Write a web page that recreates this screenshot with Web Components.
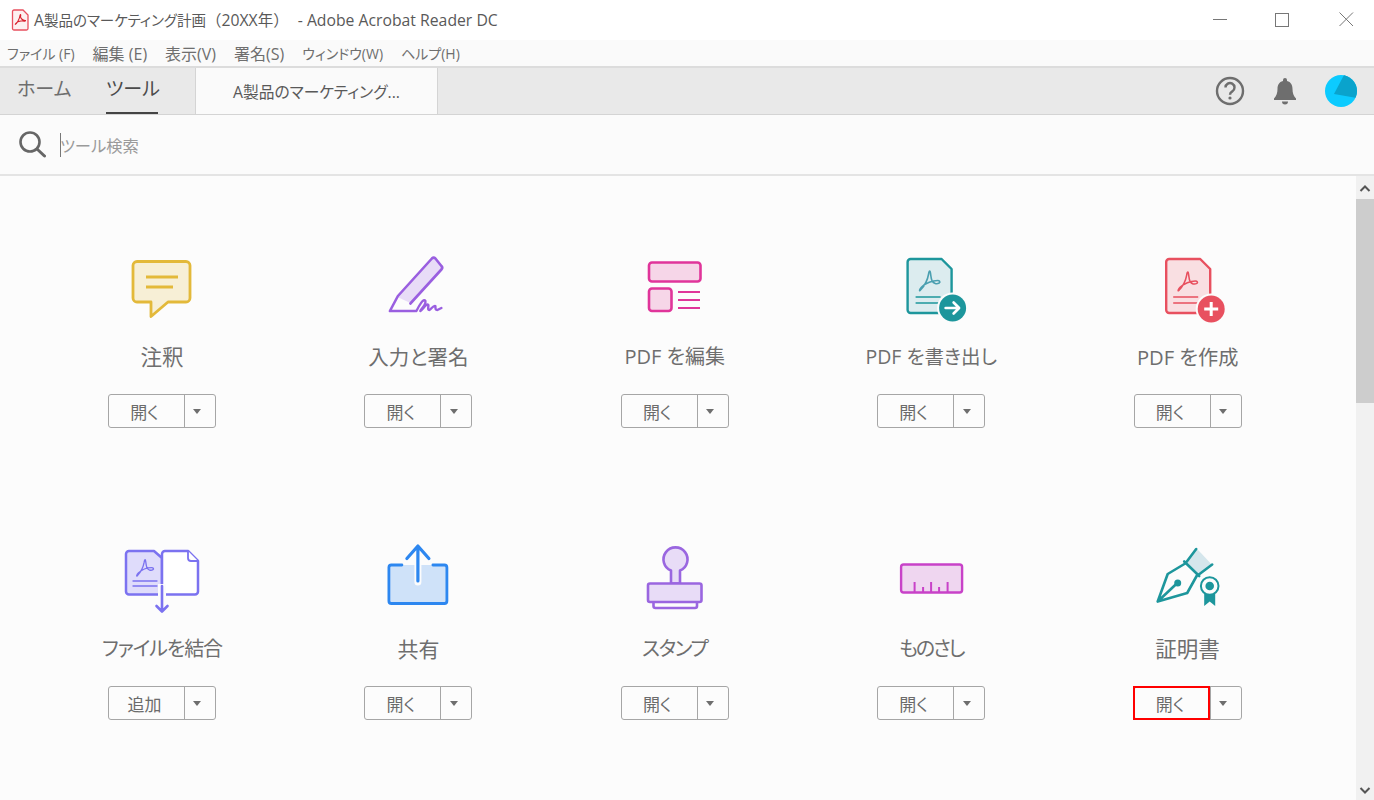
<!DOCTYPE html>
<html lang="ja">
<head>
<meta charset="utf-8">
<title>Adobe Acrobat Reader DC</title>
<style>
    html, body { margin: 0; height: 100%; overflow: hidden; }
    body {
        display: flex;
        flex-direction: column;
        background: #fcfcfc;
        font-family: "Open Sans", "Noto Sans CJK JP", sans-serif;
        font-feature-settings: "palt";
        color: #6b6b6b;
    }
    .content { flex: 1; display: flex; min-height: 0; }
</style>
</head>
<body>
<svg width="0" height="0" style="position:absolute">
    <symbol id="pdf-mark" viewBox="0 0 24 24">
        <path fill="none" stroke="currentColor" stroke-width="1.600" stroke-linejoin="round" d="M2.500 21.500C6 18 10 11 11 5 11.300 2.500 12 1.500 12.500 2.500 13.500 6 13 9 14.500 12 16 14.500 19 15.500 21.500 14 23 13 22 11.500 20 11.500 15 11.500 8 14 4 18 2 20 1.500 22.500 2.500 21.500Z"/>
    </symbol>
</svg>

<app-titlebar>A<span class="jp">製品のマーケティング計画</span><span class="fw">（</span>20XX<span class="fw">年）</span><span class="tail">- Adobe Acrobat Reader DC</span></app-titlebar>
<app-menubar>
    <span>ファイル (F)</span>
    <span class="k">編集 (E)</span>
    <span class="k">表示(V)</span>
    <span class="k">署名(S)</span>
    <span>ウィンドウ(W)</span>
    <span>ヘルプ(H)</span>
</app-menubar>
<app-tabbar doc="A製品のマーケティング..."></app-tabbar>
<tool-search placeholder="ツール検索"></tool-search>

<div class="content">
    <tool-grid>
        <tool-card label="注釈" action="開く" style="--label-size:21.500px">
            <svg slot="icon" viewBox="126 250 72 72" fill="none" stroke="#e3b93a" stroke-width="2.800" stroke-linejoin="round" stroke-linecap="round">
                <path fill="#f7efd6" d="M137 261.500H186a4 4 0 0 1 4 4V298a4 4 0 0 1-4 4H168L151 316.500V302H137a4 4 0 0 1-4-4V265.500a4 4 0 0 1 4-4Z"/>
                <path stroke-width="3" stroke-linecap="butt" d="M146 277H178M146 287H173"/>
            </svg>
        </tool-card>
        <tool-card label="入力と署名" action="開く" style="--label-size:20.500px">
            <svg slot="icon" viewBox="382.600 250 72 72" fill="none" stroke="#9a5fe0" stroke-width="2.600" stroke-linejoin="round" stroke-linecap="round">
                <path fill="#e8dcf7" stroke="none" d="M433 257L443 268 411 303 398 297 402 291Z"/>
                <path d="M411 303.500L442 269.500a2.500 2.500 0 0 0 0-3.500L436 258.500a2.500 2.500 0 0 0-3.500 0L398.500 296 390.500 311H416"/>
                <path stroke-width="2.400" d="M417 311C420 305 424 298 426 301 427 305 420 311 421 311 424 309 427 303 429 305 429 308 428 310 430 310 432 309 434 305 436 306 436 309 436 310 438 310L442 308"/>
            </svg>
        </tool-card>
        <tool-card label="PDF を編集" action="開く" style="--label-size:20px">
            <svg slot="icon" viewBox="639 250 72 72" fill="#f6d6e8" stroke="#e0359a" stroke-width="2.600">
                <rect x="649" y="262.500" width="51.500" height="19" rx="3"/>
                <rect x="649" y="288.500" width="22.500" height="22.500" rx="3"/>
                <path fill="none" stroke-width="2" d="M678 292H700M678 300H700M678 308H700"/>
            </svg>
        </tool-card>
        <tool-card label="PDF を書き出し" action="開く" style="--label-size:19.500px">
            <svg slot="icon" viewBox="895.400 250 72 72" fill="none" stroke="#1d969c" stroke-width="2.400" stroke-linejoin="round">
                <path fill="#dcecef" d="M911 259H942L952 269V310a3 3 0 0 1-3 3H911a3 3 0 0 1-3-3V262a3 3 0 0 1 3-3Z"/>
                <use href="#pdf-mark" x="918" y="269" width="24" height="24" stroke="none" style="color:#4a9fb0"/>
                <path stroke-width="1.400" d="M916 297H941M916 303H941"/>
                <circle cx="953" cy="308" r="15.500" fill="#fcfcfc" stroke="none"/>
                <circle cx="953" cy="308" r="13.500" fill="#1d969c" stroke="none"/>
                <path stroke="#fff" stroke-width="2.600" stroke-linecap="round" d="M946 308H959M954 302.500L959.500 308 954 313.500"/>
            </svg>
        </tool-card>
        <tool-card label="PDF を作成" action="開く" style="--label-size:20.200px">
            <svg slot="icon" viewBox="1151.800 250 72 72" fill="none" stroke="#e8505f" stroke-width="2.400" stroke-linejoin="round">
                <path fill="#f9dfe2" d="M1169 259H1200L1210 269V310a3 3 0 0 1-3 3H1169a3 3 0 0 1-3-3V262a3 3 0 0 1 3-3Z"/>
                <use href="#pdf-mark" x="1176" y="270" width="23" height="23" stroke="none" style="color:#e8505f"/>
                <path stroke-width="1.400" d="M1173 297H1198M1173 303H1198"/>
                <circle cx="1211" cy="309" r="15.500" fill="#fcfcfc" stroke="none"/>
                <circle cx="1211" cy="309" r="13.500" fill="#e8505f" stroke="none"/>
                <path stroke="#fff" stroke-width="3" d="M1204 309H1218M1211 302V316"/>
            </svg>
        </tool-card>

        <tool-card label="ファイルを結合" action="追加" style="--label-size:20px;--label-track:-1.100px">
            <svg slot="icon" viewBox="126 542 72 72" fill="none" stroke="#7b72f0" stroke-width="2.500" stroke-linejoin="round" stroke-linecap="round">
                <path fill="#dfdcfb" d="M129 551H154L162 558V594.500H129a3 3 0 0 1-3-3V554a3 3 0 0 1 3-3Z"/>
                <path fill="#fff" d="M165 551H188L198 561V591.500a3 3 0 0 1-3 3H162V554a3 3 0 0 1 3-3Z"/>
                <path fill="#fff" stroke-width="1.800" d="M188 551V558a3 3 0 0 0 3 3H198"/>
                <use href="#pdf-mark" x="135" y="558" width="20" height="20" stroke="none" style="color:#7b72f0"/>
                <path stroke-width="1.300" d="M133 581H157M133 586H157"/>
                <rect x="158" y="584" width="8" height="14" fill="#fcfcfc" stroke="none"/>
                <path stroke-width="2.600" d="M162 586V611M156.500 606L162 611.500 167.500 606"/>
            </svg>
        </tool-card>
        <tool-card label="共有" action="開く">
            <svg slot="icon" viewBox="382.600 542 72 72" fill="none" stroke="#2d87f0" stroke-width="2.800" stroke-linejoin="round" stroke-linecap="round">
                <path fill="#cfe2f9" stroke="none" d="M390 565H447V603H390Z"/>
                <path d="M402.500 565H392a2.500 2.500 0 0 0-2.500 2.500V601a2.500 2.500 0 0 0 2.500 2.500H445a2.500 2.500 0 0 0 2.500-2.500V567.500A2.500 2.500 0 0 0 445 565H433.500"/>
                <path stroke="#fcfcfc" stroke-width="7" d="M418.500 560V582"/>
                <path stroke-width="3.200" d="M418.500 547V581M407.500 558.500L418.500 546 429.500 558.500"/>
            </svg>
        </tool-card>
        <tool-card label="スタンプ" action="開く" style="--label-size:20px;--label-track:-1.400px">
            <svg slot="icon" viewBox="639 542 72 72" fill="#e8dcf7" stroke="#9a66e0" stroke-width="2.600" stroke-linejoin="round">
                <path d="M671 570.500a12 12 0 1 1 9 0V583.500H671Z"/>
                <rect x="648" y="583.500" width="53.500" height="18.500" rx="2"/>
                <path fill="none" d="M653.500 602V606a2 2 0 0 0 2 2H695a2 2 0 0 0 2-2V602"/>
            </svg>
        </tool-card>
        <tool-card label="ものさし" action="開く" style="--label-size:20px;--label-track:-2.200px">
            <svg slot="icon" viewBox="895.400 542 72 72" fill="#efd6f0" stroke="#c842c8" stroke-width="2.400">
                <rect x="901.500" y="564.500" width="61" height="28" rx="2.500"/>
                <path fill="none" stroke-width="2" d="M915 582V592M923.500 587V592M931.500 582V592M939.500 587V592M948 582V592"/>
            </svg>
        </tool-card>
        <tool-card label="証明書" action="開く" focused style="--label-size:21.500px">
            <svg slot="icon" viewBox="1151.800 542 72 72" fill="none" stroke="#1d969c" stroke-width="2.600" stroke-linejoin="round" stroke-linecap="round">
                <path fill="#d5e6ec" stroke="none" d="M1196 548L1212 565 1198 574 1186 562Z"/>
                <path d="M1196 549L1185.500 563M1212 564.500L1198 575M1184 561.500L1199 576"/>
                <path d="M1185 563.500L1167.500 574 1157.500 601.500 1187 593 1197 575M1157.500 601.500L1175 585"/>
                <circle cx="1177.500" cy="583" r="3.500" fill="#1d969c" stroke="none"/>
                <path fill="#1d969c" stroke="none" d="M1204 594H1215V606L1209.500 601.500 1204 606Z"/>
                <circle cx="1209.500" cy="586" r="8.800" fill="#fcfcfc" stroke-width="2"/>
                <circle cx="1209.500" cy="586" r="4.300" fill="#1d969c" stroke="none"/>
            </svg>
        </tool-card>
    </tool-grid>
    <app-scrollbar></app-scrollbar>
</div>

<script>
class AppTitlebar extends HTMLElement {
    constructor() {
        super();
        this.attachShadow({ mode: "open" });
        this.shadowRoot.innerHTML = `
            <style>
                :host {
                    display: flex;
                    align-items: center;
                    height: 40px;
                    background: #fff;
                    padding-left: 11px;
                    font-size: 15.750px;
                    color: #595959;
                    flex: none;
                }
                .app-icon { width: 18px; height: 22px; margin-right: 5px; flex: none; }
                .title { flex: 1; white-space: nowrap; position: relative; top: -1px; }
                ::slotted(.jp) { font-size: 14.500px; }
                ::slotted(.fw) { font-size: 15.500px; font-feature-settings: normal; }
                ::slotted(.tail) { margin-left: 9px; }
                .controls { display: flex; margin-right: -4px; }
                .controls svg { width: 64px; height: 40px; display: block; }
            </style>
            <svg class="app-icon" viewBox="0 0 18 22" fill="none">
                <path fill="#fdf0f0" stroke="#e8505f" stroke-width="1.300" d="M3 1H12L17 6V19.500a1.500 1.500 0 0 1-1.500 1.500H3a1.500 1.500 0 0 1-1.500-1.500V2.500A1.500 1.500 0 0 1 3 1Z"/>
                <path stroke="#d8202c" stroke-width="1.100" d="M4 15.500C6 14.500 8.500 10 9 6.500 9.500 4.500 10 6 9.500 8 10.500 10.500 12 11.500 14.500 11.500 15 12.500 12 12 10 12 8 12 5.500 13.500 4 15.500Z"/>
            </svg>
            <span class="title"><slot></slot></span>
            <div class="controls">
                <svg viewBox="0 0 64 40"><path stroke="#777" d="M27 19.500H41"/></svg>
                <svg viewBox="0 0 64 40"><rect x="25.500" y="13.500" width="13" height="13" fill="none" stroke="#777"/></svg>
                <svg viewBox="0 0 64 40"><path stroke="#777" d="M25.500 12.500L39 26M39 12.500L25.500 26"/></svg>
            </div>
        `;
    }
}
customElements.define("app-titlebar", AppTitlebar);

class AppMenubar extends HTMLElement {
    constructor() {
        super();
        this.attachShadow({ mode: "open" });
        this.shadowRoot.innerHTML = `
            <style>
                :host {
                    display: flex;
                    align-items: center;
                    gap: 18px;
                    height: 26px;
                    padding-left: 7px;
                    background: #fafafa;
                    font-size: 14px;
                    color: #6e6e6e;
                    white-space: nowrap;
                    flex: none;
                }
                ::slotted(.k) { font-size: 16px; }
            </style>
            <slot></slot>
        `;
    }
}
customElements.define("app-menubar", AppMenubar);

class AppTabbar extends HTMLElement {
    constructor() {
        super();
        this.attachShadow({ mode: "open" });
        this.shadowRoot.innerHTML = `
            <style>
                :host {
                    display: flex;
                    align-items: stretch;
                    height: 46px;
                    background: #e9e9e9;
                    border-top: 2px solid #dcdcdc;
                    border-bottom: 1px solid #d4d4d4;
                    flex: none;
                }
                .tab {
                    width: 55px;
                    font-size: 19px;
                    color: #6e6e6e;
                    margin-left: 17px;
                    line-height: 42px;
                    box-sizing: border-box;
                    white-space: nowrap;
                }
                .tab.active {
                    width: 52px;
                    margin-left: 34px;
                    color: #4b4b4b;
                    border-bottom: 2px solid #444;
                }
                .doc {
                    width: 241px;
                    margin-left: 37px;
                    background: #fafafa;
                    border-left: 1px solid #d4d4d4;
                    border-right: 1px solid #d4d4d4;
                    font-size: 15.750px;
                    color: #595959;
                    display: flex;
                    align-items: center;
                    justify-content: center;
                    white-space: nowrap;
                }
                .right {
                    margin-left: auto;
                    display: flex;
                    align-items: center;
                    padding-right: 17px;
                    gap: 27px;
                }
                svg { display: block; }
            </style>
            <div class="tab">ホーム</div>
            <div class="tab active">ツール</div>
            <div class="doc"></div>
            <div class="right">
                <svg width="32" height="32" viewBox="0 0 32 32">
                    <circle cx="16" cy="16" r="13" fill="none" stroke="#6e6e6e" stroke-width="2.400"/>
                    <path fill="none" stroke="#6e6e6e" stroke-width="2.400" d="M11.500 12.500a4.500 4.500 0 1 1 6.800 3.900c-1.500.9-2.300 1.700-2.300 3.400"/>
                    <circle cx="16" cy="23" r="1.600" fill="#6e6e6e"/>
                </svg>
                <svg width="24" height="28" viewBox="0 0 24 28" style="margin-right:1px">
                    <path fill="#6e6e6e" d="M10 3a2 2 0 0 1 4 0V4c4 1 5.500 4 5.500 8 0 4 1 7 3.500 9.500V23H1V21.500C3.500 19 4.500 16 4.500 12 4.500 8 6 5 10 4Z"/>
                    <path fill="#6e6e6e" d="M9 24.500H15a3 3 0 0 1-6 0Z"/>
                </svg>
                <svg width="32" height="32" viewBox="0 0 32 32">
                    <defs><clipPath id="round"><circle cx="16" cy="16" r="16"/></clipPath></defs>
                    <g clip-path="url(#round)">
                        <rect width="32" height="32" fill="#0ccbff"/>
                        <path fill="#0aa3cc" d="M19 0H32V23L9 19Z"/>
                    </g>
                </svg>
            </div>
        `;
    }

    connectedCallback() {
        this.shadowRoot.querySelector(".doc").textContent = this.getAttribute("doc");
    }
}
customElements.define("app-tabbar", AppTabbar);

class ToolSearch extends HTMLElement {
    constructor() {
        super();
        this.attachShadow({ mode: "open" });
        this.shadowRoot.innerHTML = `
            <style>
                :host {
                    display: flex;
                    align-items: center;
                    height: 59px;
                    padding-left: 19px;
                    background: #fbfbfb;
                    border-bottom: 2px solid #e4e4e4;
                    box-sizing: content-box;
                    font-size: 16.300px;
                    color: #9a9a9a;
                    flex: none;
                }
                svg { display: block; margin-right: 14px; }
                .caret { width: 1px; height: 24px; background: #777; margin-right: -1px; }
            </style>
            <svg width="27" height="27" viewBox="0 0 27 27" fill="none" stroke="#666" stroke-width="2.600">
                <circle cx="11" cy="11" r="9.500"/>
                <path stroke-width="3" stroke-linecap="round" d="M18 18L25.500 25"/>
            </svg>
            <span class="caret"></span>
            <span class="text"></span>
        `;
    }

    connectedCallback() {
        this.shadowRoot.querySelector(".text").textContent = this.getAttribute("placeholder");
    }
}
customElements.define("tool-search", ToolSearch);

class ToolGrid extends HTMLElement {
    constructor() {
        super();
        this.attachShadow({ mode: "open" });
        this.shadowRoot.innerHTML = `
            <style>
                :host {
                    flex: 1;
                    display: grid;
                    grid-template-columns: repeat(5, 1fr);
                    grid-auto-rows: 178px;
                    row-gap: 114px;
                    align-content: start;
                    padding: 74px 40.200px 0 33.800px;
                    overflow: hidden;
                }
            </style>
            <slot></slot>
        `;
    }
}
customElements.define("tool-grid", ToolGrid);

class ToolCard extends HTMLElement {
    constructor() {
        super();
        this.attachShadow({ mode: "open" });
        this.shadowRoot.innerHTML = `
            <style>
                :host {
                    display: flex;
                    flex-direction: column;
                    align-items: center;
                }
                ::slotted(svg) {
                    display: block;
                    width: 72px;
                    height: 72px;
                    overflow: visible;
                }
                .label {
                    margin-top: 23px;
                    font-size: var(--label-size, 21px);
                    letter-spacing: var(--label-track, 0);
                    line-height: 24px;
                    color: #6e6e6e;
                    white-space: nowrap;
                }
                .split {
                    margin-top: 25px;
                    width: 108px;
                    height: 34px;
                    box-sizing: border-box;
                    display: flex;
                    border: 1px solid #a6a6a6;
                    border-radius: 3px;
                    font-size: 17px;
                    color: #6b6b6b;
                    background: #fcfcfc;
                    position: relative;
                }
                .main {
                    width: 76px;
                    box-sizing: border-box;
                    padding-right: 4px;
                    display: flex;
                    align-items: center;
                    justify-content: center;
                    border-right: 1px solid #a6a6a6;
                }
                .more {
                    flex: 1;
                    padding-right: 5px;
                    display: flex;
                    align-items: center;
                    justify-content: center;
                }
                .more i {
                    border: 4.500px solid transparent;
                    border-top: 5px solid #6e6e6e;
                    border-bottom: 0;
                }
                :host([focused]) .main::after {
                    content: "";
                    position: absolute;
                    left: -2px;
                    top: -1px;
                    width: 77px;
                    height: 34px;
                    box-sizing: border-box;
                    border: 2px solid #f00;
                }
            </style>
            <slot name="icon"></slot>
            <div class="label"></div>
            <div class="split">
                <div class="main"></div>
                <div class="more"><i></i></div>
            </div>
        `;
    }

    connectedCallback() {
        this.shadowRoot.querySelector(".label").textContent = this.getAttribute("label");
        this.shadowRoot.querySelector(".main").textContent = this.getAttribute("action");
    }
}
customElements.define("tool-card", ToolCard);

class AppScrollbar extends HTMLElement {
    constructor() {
        super();
        this.attachShadow({ mode: "open" });
        this.shadowRoot.innerHTML = `
            <style>
                :host {
                    display: flex;
                    flex-direction: column;
                    width: 18px;
                    background: #f1f1f1;
                    flex: none;
                }
                svg { display: block; flex: none; }
                .thumb { height: 204px; background: #cdcdcd; flex: none; }
                .track { flex: 1; }
            </style>
            <svg width="18" height="23" viewBox="0 0 18 23"><path d="M4.500 15L9 10.500 13.500 15" fill="none" stroke="#555" stroke-width="2"/></svg>
            <div class="thumb"></div>
            <div class="track"></div>
            <svg width="18" height="22" viewBox="0 0 18 22"><path d="M4.500 10L9 14.500 13.500 10" fill="none" stroke="#555" stroke-width="2"/></svg>
        `;
    }
}
customElements.define("app-scrollbar", AppScrollbar);
</script>
</body>
</html>
